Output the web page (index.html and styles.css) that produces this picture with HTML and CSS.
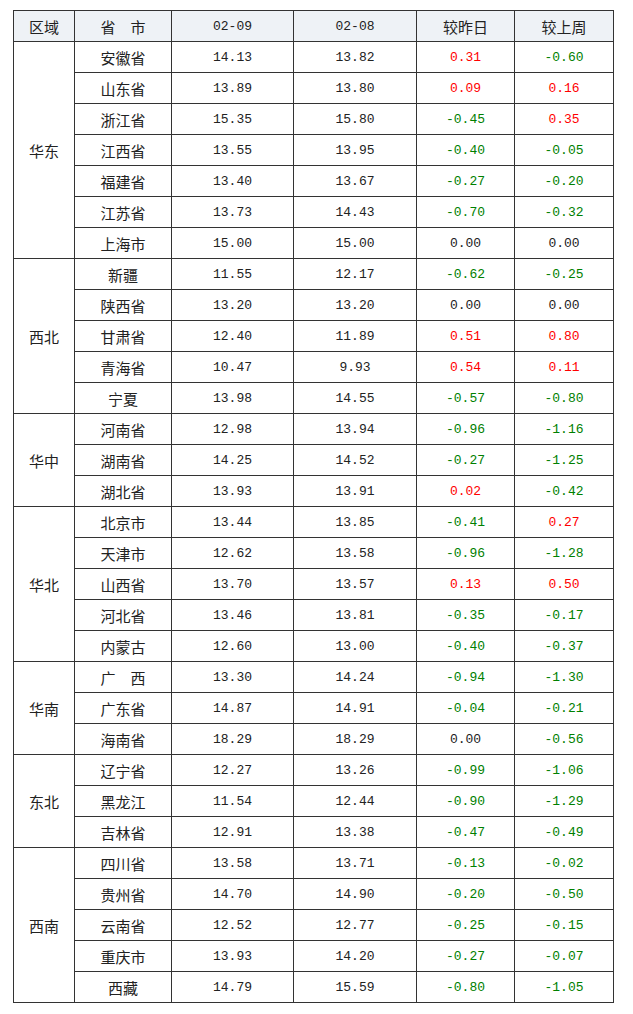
FILE: index.html
```html
<!DOCTYPE html>
<html lang="zh">
<head>
<meta charset="utf-8">
<link rel="stylesheet" href="styles.css">
</head>
<body>
<div class="wrap">
<table class="price">
<colgroup>
<col class="c1"><col class="c2"><col class="c3"><col class="c4"><col class="c5"><col class="c6">
</colgroup>
<thead>
<tr><th class="cjk">区域</th><th class="cjk">省　市</th><th class="num">02-09</th><th class="num">02-08</th><th class="cjk">较昨日</th><th class="cjk">较上周</th></tr>
</thead>
<tbody>
<tr><td class="cjk" rowspan="7">华东</td><td class="cjk">安徽省</td><td class="num">14.13</td><td class="num">13.82</td><td class="num up">0.31</td><td class="num down">-0.60</td></tr>
<tr><td class="cjk">山东省</td><td class="num">13.89</td><td class="num">13.80</td><td class="num up">0.09</td><td class="num up">0.16</td></tr>
<tr><td class="cjk">浙江省</td><td class="num">15.35</td><td class="num">15.80</td><td class="num down">-0.45</td><td class="num up">0.35</td></tr>
<tr><td class="cjk">江西省</td><td class="num">13.55</td><td class="num">13.95</td><td class="num down">-0.40</td><td class="num down">-0.05</td></tr>
<tr><td class="cjk">福建省</td><td class="num">13.40</td><td class="num">13.67</td><td class="num down">-0.27</td><td class="num down">-0.20</td></tr>
<tr><td class="cjk">江苏省</td><td class="num">13.73</td><td class="num">14.43</td><td class="num down">-0.70</td><td class="num down">-0.32</td></tr>
<tr><td class="cjk">上海市</td><td class="num">15.00</td><td class="num">15.00</td><td class="num">0.00</td><td class="num">0.00</td></tr>

<tr><td class="cjk" rowspan="5">西北</td><td class="cjk">新疆</td><td class="num">11.55</td><td class="num">12.17</td><td class="num down">-0.62</td><td class="num down">-0.25</td></tr>
<tr><td class="cjk">陕西省</td><td class="num">13.20</td><td class="num">13.20</td><td class="num">0.00</td><td class="num">0.00</td></tr>
<tr><td class="cjk">甘肃省</td><td class="num">12.40</td><td class="num">11.89</td><td class="num up">0.51</td><td class="num up">0.80</td></tr>
<tr><td class="cjk">青海省</td><td class="num">10.47</td><td class="num">9.93</td><td class="num up">0.54</td><td class="num up">0.11</td></tr>
<tr><td class="cjk">宁夏</td><td class="num">13.98</td><td class="num">14.55</td><td class="num down">-0.57</td><td class="num down">-0.80</td></tr>

<tr><td class="cjk" rowspan="3">华中</td><td class="cjk">河南省</td><td class="num">12.98</td><td class="num">13.94</td><td class="num down">-0.96</td><td class="num down">-1.16</td></tr>
<tr><td class="cjk">湖南省</td><td class="num">14.25</td><td class="num">14.52</td><td class="num down">-0.27</td><td class="num down">-1.25</td></tr>
<tr><td class="cjk">湖北省</td><td class="num">13.93</td><td class="num">13.91</td><td class="num up">0.02</td><td class="num down">-0.42</td></tr>

<tr><td class="cjk" rowspan="5">华北</td><td class="cjk">北京市</td><td class="num">13.44</td><td class="num">13.85</td><td class="num down">-0.41</td><td class="num up">0.27</td></tr>
<tr><td class="cjk">天津市</td><td class="num">12.62</td><td class="num">13.58</td><td class="num down">-0.96</td><td class="num down">-1.28</td></tr>
<tr><td class="cjk">山西省</td><td class="num">13.70</td><td class="num">13.57</td><td class="num up">0.13</td><td class="num up">0.50</td></tr>
<tr><td class="cjk">河北省</td><td class="num">13.46</td><td class="num">13.81</td><td class="num down">-0.35</td><td class="num down">-0.17</td></tr>
<tr><td class="cjk">内蒙古</td><td class="num">12.60</td><td class="num">13.00</td><td class="num down">-0.40</td><td class="num down">-0.37</td></tr>

<tr><td class="cjk" rowspan="3">华南</td><td class="cjk">广　西</td><td class="num">13.30</td><td class="num">14.24</td><td class="num down">-0.94</td><td class="num down">-1.30</td></tr>
<tr><td class="cjk">广东省</td><td class="num">14.87</td><td class="num">14.91</td><td class="num down">-0.04</td><td class="num down">-0.21</td></tr>
<tr><td class="cjk">海南省</td><td class="num">18.29</td><td class="num">18.29</td><td class="num">0.00</td><td class="num down">-0.56</td></tr>

<tr><td class="cjk" rowspan="3">东北</td><td class="cjk">辽宁省</td><td class="num">12.27</td><td class="num">13.26</td><td class="num down">-0.99</td><td class="num down">-1.06</td></tr>
<tr><td class="cjk">黑龙江</td><td class="num">11.54</td><td class="num">12.44</td><td class="num down">-0.90</td><td class="num down">-1.29</td></tr>
<tr><td class="cjk">吉林省</td><td class="num">12.91</td><td class="num">13.38</td><td class="num down">-0.47</td><td class="num down">-0.49</td></tr>

<tr><td class="cjk" rowspan="5">西南</td><td class="cjk">四川省</td><td class="num">13.58</td><td class="num">13.71</td><td class="num down">-0.13</td><td class="num down">-0.02</td></tr>
<tr><td class="cjk">贵州省</td><td class="num">14.70</td><td class="num">14.90</td><td class="num down">-0.20</td><td class="num down">-0.50</td></tr>
<tr><td class="cjk">云南省</td><td class="num">12.52</td><td class="num">12.77</td><td class="num down">-0.25</td><td class="num down">-0.15</td></tr>
<tr><td class="cjk">重庆市</td><td class="num">13.93</td><td class="num">14.20</td><td class="num down">-0.27</td><td class="num down">-0.07</td></tr>
<tr><td class="cjk">西藏</td><td class="num">14.79</td><td class="num">15.59</td><td class="num down">-0.80</td><td class="num down">-1.05</td></tr>
</tbody>
</table>
</div>
</body>
</html>
```

FILE: styles.css
```css
html, body {
  margin: 0;
  padding: 0;
  background: #ffffff;
}

.wrap {
  padding: 10px 0 0 13px;
}

.price {
  border-collapse: collapse;
  table-layout: fixed;
  width: 600px;
  color: #222222;
}

.c1 { width: 61px; }
.c2 { width: 97px; }
.c3 { width: 122px; }
.c4 { width: 123px; }
.c5 { width: 98px; }
.c6 { width: 99px; }

.price th,
.price td {
  border: 1px solid #333333;
  height: 31px;
  padding: 0;
  text-align: center;
  vertical-align: middle;
  font-weight: normal;
  box-sizing: border-box;
}

.price thead th {
  background: #eef2f6;
}

.cjk {
  font-family: "Noto Sans CJK SC", sans-serif;
  font-size: 15px;
}

.num {
  font-family: "Liberation Mono", "Noto Sans CJK SC", monospace;
  font-size: 13px;
}

.up { color: #ff0000; }
.down { color: #008000; }
```
